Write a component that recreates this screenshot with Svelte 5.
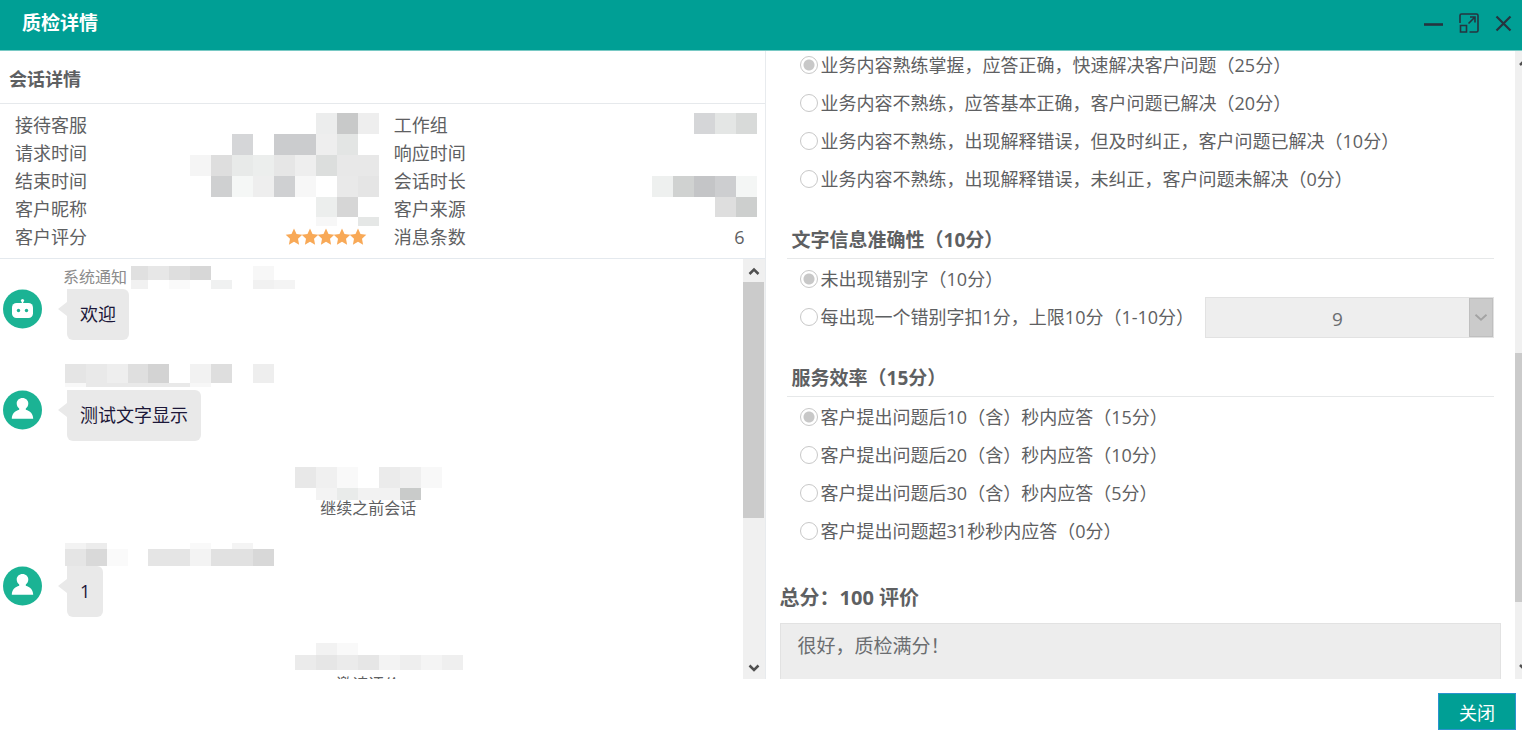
<script>
  const info = [
    ['接待客服', '', '工作组', ''],
    ['请求时间', '', '响应时间', ''],
    ['结束时间', '', '会话时长', ''],
    ['客户昵称', '', '客户来源', ''],
    ['客户评分', 'stars', '消息条数', '6']
  ];

  // Redacted values: [x, y, width, height, colour]
  const leftMask = [
    [126, 0, 21, 21, '#eceded'], [147, 0, 21, 21, '#c8c9c9'], [168, 0, 21, 21, '#eeeeee'],
    [42, 21, 21, 21, '#d5d6d8'], [84, 21, 42, 21, '#cbccce'], [126, 21, 21, 21, '#eeeeee'], [147, 21, 21, 21, '#e3e5e4'],
    [0, 42, 21, 21, '#f5f5f5'], [21, 42, 21, 21, '#dedede'], [42, 42, 21, 21, '#e8eae9'], [63, 42, 21, 21, '#eceeed'],
    [84, 42, 21, 21, '#e6e6e6'], [105, 42, 21, 21, '#eeeeee'], [126, 42, 21, 21, '#dcdedd'], [147, 42, 42, 21, '#e8e8e8'],
    [21, 63, 21, 21, '#cfd0d1'], [42, 63, 21, 21, '#f5f7f6'], [63, 63, 21, 21, '#eeeeee'], [84, 63, 21, 21, '#cfd0d2'],
    [105, 63, 21, 21, '#f7f7f7'], [147, 63, 21, 21, '#e9e9e9'], [168, 63, 21, 21, '#e5e5e5'],
    [126, 84, 21, 20, '#eceeed'], [147, 84, 21, 20, '#d6d6d6'],
    [126, 104, 21, 9, '#f7f7f7'], [168, 104, 21, 9, '#e5e7e6']
  ];
  const rightMask = [
    [42, 0, 21, 21, '#d5d6d8'], [63, 0, 21, 21, '#e4e6e5'], [84, 0, 21, 21, '#d8dad9'],
    [0, 63, 21, 21, '#eef0ef'], [21, 63, 21, 21, '#d0d2d1'], [42, 63, 21, 21, '#c4c5c7'], [63, 63, 21, 21, '#cdced0'], [84, 63, 21, 21, '#f4f6f5'],
    [63, 84, 21, 20, '#dedede'], [84, 84, 21, 20, '#cdcfce']
  ];

  const chat = [
    {
      kind: 'robot', name: '系统通知', text: '欢迎', w: 164, h: 23,
      mask: [[0, 0, 17, 14, '#e0e0e0'], [17, 0, 21, 14, '#e7e7e7'], [38, 0, 21, 14, '#dedede'], [59, 0, 21, 14, '#d7d7d7'], [122, 0, 21, 14, '#f7f7f7'],
        [0, 14, 17, 9, '#f1f1f1'], [38, 14, 21, 9, '#fafafa'], [80, 14, 21, 9, '#f0f1f1'], [122, 14, 21, 9, '#f1f1f1'], [143, 14, 21, 9, '#f4f4f4']]
    },
    {
      kind: 'user', text: '测试文字显示', w: 209, h: 23,
      mask: [[0, 0, 21, 19, '#e5e5e5'], [21, 0, 21, 19, '#e9e9e9'], [42, 0, 21, 19, '#eeeeee'], [63, 0, 20, 19, '#dfdfdf'], [83, 0, 21, 19, '#d3d3d3'],
        [125, 0, 21, 19, '#f2f2f2'], [146, 0, 21, 19, '#dedede'], [188, 0, 21, 19, '#eeeeee'],
        [0, 19, 21, 4, '#f8f8f8'], [21, 19, 104, 4, '#e9e9e9'], [125, 19, 21, 4, '#f7f7f7']]
    },
    {
      kind: 'notice', text: '继续之前会话', w: 147, h: 33,
      mask: [[0, 0, 21, 21, '#e8e8e8'], [21, 0, 21, 21, '#f0f0f0'], [42, 0, 21, 21, '#f9f9f9'], [84, 0, 21, 21, '#ebebeb'], [105, 0, 21, 21, '#efefef'], [126, 0, 21, 21, '#f8f8f8'],
        [21, 21, 21, 12, '#f3f3f3'], [42, 21, 21, 12, '#e9ebea'], [63, 21, 42, 12, '#f2f2f2'], [105, 21, 21, 12, '#c9cbca']]
    },
    {
      kind: 'user', tight: true, text: '1', w: 209, h: 23,
      mask: [[0, 0, 21, 6, '#f3f3f3'], [21, 0, 21, 6, '#ececec'], [125, 0, 21, 6, '#f9f9f9'], [167, 0, 21, 6, '#f4f4f4'],
        [0, 6, 21, 17, '#e5e5e5'], [21, 6, 21, 17, '#d9d9d9'], [42, 6, 21, 17, '#fafafa'], [83, 6, 42, 17, '#e5e5e5'], [125, 6, 21, 17, '#f3f3f3'],
        [146, 6, 42, 17, '#e1e1e1'], [188, 6, 21, 17, '#d8d8d8']]
    },
    {
      kind: 'notice', text: '邀请评价', w: 147, h: 33,
      mask: [[21, 0, 21, 12, '#f2f2f2'], [42, 0, 21, 12, '#f9f9f9'],
        [0, 12, 21, 15, '#ebebeb'], [21, 12, 21, 15, '#e6e6e6'], [42, 12, 21, 15, '#ebebeb'], [63, 12, 21, 15, '#e6e6e6'],
        [84, 12, 21, 15, '#f3f3f3'], [105, 12, 21, 15, '#eeeeee'], [126, 12, 21, 15, '#f4f4f4'], [147, 12, 21, 15, '#efefef']]
    }
  ];

  const groups = [
    {
      id: 'skill', title: '',
      options: ['业务内容熟练掌握，应答正确，快速解决客户问题（25分）', '业务内容不熟练，应答基本正确，客户问题已解决（20分）',
        '业务内容不熟练，出现解释错误，但及时纠正，客户问题已解决（10分）', '业务内容不熟练，出现解释错误，未纠正，客户问题未解决（0分）']
    },
    { id: 'text', title: '文字信息准确性（10分）', options: ['未出现错别字（10分）', '每出现一个错别字扣1分，上限10分（1-10分）'], select: 1 },
    {
      id: 'speed', title: '服务效率（15分）',
      options: ['客户提出问题后10（含）秒内应答（15分）', '客户提出问题后20（含）秒内应答（10分）', '客户提出问题后30（含）秒内应答（5分）', '客户提出问题超31秒秒内应答（0分）']
    }
  ];
</script>

{#snippet mosaic(cells, w, h)}
  <svg class="mosaic" width={w} height={h} viewBox="0 0 {w} {h}" shape-rendering="crispEdges" aria-hidden="true">
    {#each cells as [x, y, cw, ch, fill]}
      <rect {x} {y} width={cw} height={ch} {fill} />
    {/each}
  </svg>
{/snippet}

<div class="dialog" role="dialog" aria-labelledby="title">
  <header class="titlebar">
    <h1 id="title">质检详情</h1>
    <div class="tools">
      <button type="button" aria-label="最小化">
        <svg width="20" height="20" viewBox="0 0 20 20"><path d="M0 11.500H19" stroke-width="2.6" /></svg>
      </button>
      <button type="button" aria-label="最大化">
        <svg width="20" height="20" viewBox="0 0 20 20"><path d="M1 10V2.500Q1 1 2.500 1H17.500Q19 1 19 2.500V17.500Q19 19 17.500 19H10.500M1.500 12.500H7.500V19H1.500ZM9.500 10.500L16 4M11 4H16V9.500" stroke-width="1.6" /></svg>
      </button>
      <button type="button" aria-label="关闭窗口">
        <svg width="20" height="20" viewBox="0 0 20 20"><path d="M2.500 3.500L16.500 17.500M16.500 3.500L2.500 17.500" stroke-width="2.2" /></svg>
      </button>
    </div>
  </header>

  <main>
    <section class="session">
      <h2>会话详情</h2>
      <div class="info">
        {#each info as [label, value, label2, value2]}
          <div class="cell">
            <span>{label}</span>
            {#if value === 'stars'}
              <span class="stars" role="img" aria-label="5星">
                {#each Array(5) as _}
                  <svg width="16" height="18" viewBox="0 0 16 16" overflow="visible"><path fill="#f8a957" d="M8 -0.500L10.500 5L16.300 5.700L12 9.800L13.100 15.700L8 12.800L2.900 15.700L4 9.800L-0.300 5.700L5.500 5Z" /></svg>
                {/each}
              </span>
            {/if}
          </div>
          <div class="cell"><span>{label2}</span><span class="count">{value2}</span></div>
        {/each}
        <div class="mask left">{@render mosaic(leftMask, 189, 113)}</div>
        <div class="mask right">{@render mosaic(rightMask, 105, 104)}</div>
      </div>

      <div class="chat">
        <div class="log">
          {#each chat as m}
            {#if m.kind === 'notice'}
              <div class="notice">{@render mosaic(m.mask, m.w, m.h)}<p>{m.text}</p></div>
            {:else}
              <article class="message">
                <div class="meta" class:tight={m.tight}>
                  {#if m.name}<span>{m.name}</span>{/if}
                  {@render mosaic(m.mask, m.w, m.h)}
                </div>
                <svg class="avatar" width="40" height="40" viewBox="0 0 40 40" aria-hidden="true">
                  <circle cx="19.500" cy="20" r="19.500" fill="#1bb394" />
                  {#if m.kind === 'robot'}
                    <circle cx="19.500" cy="11.500" r="1.600" fill="#fff" />
                    <path d="M19.500 12V16" stroke="#fff" stroke-width="1.400" />
                    <rect x="9" y="14" width="21" height="15" rx="4.500" fill="#fff" />
                    <circle cx="15.500" cy="21.500" r="1.700" fill="#1bb394" /><circle cx="23.500" cy="21.500" r="1.700" fill="#1bb394" />
                  {:else}
                    <path fill="#fff" d="M19.500 8C22.800 8 25.300 10.400 25.300 13.500C25.300 15.800 24.200 17.300 22.800 18.600V19.800C27 20.800 30.200 24 30.200 28.700H8.800C8.800 24 12 20.800 16.200 19.800V18.600C14.800 17.300 13.700 15.800 13.700 13.500C13.700 10.400 16.200 8 19.500 8Z" />
                  {/if}
                </svg>
                <p class="bubble">{m.text}</p>
              </article>
            {/if}
          {/each}
        </div>
        <div class="scroll" aria-hidden="true">
          <svg width="12" height="23" viewBox="0 0 12 23"><path d="M1.500 15L6 10.500L10.500 15" /></svg>
          <div class="track"><i class="thumb"></i></div>
          <svg width="12" height="22" viewBox="0 0 12 22"><path d="M1.500 8.500L6 13L10.500 8.500" /></svg>
        </div>
      </div>
    </section>

    <section class="review">
      <form>
        {#each groups as g}
          <fieldset class:first={!g.title}>
            {#if g.title}<legend>{g.title}</legend>{/if}
            {#each g.options as o, i}
              <div class="option">
                <input type="radio" id="{g.id}{i}" name={g.id} checked={i === 0} disabled />
                <label for="{g.id}{i}">{o}</label>
                {#if g.select === i}
                  <span class="picker">
                    <select disabled aria-label="扣分"><option>9</option></select>
                    <svg width="24" height="39" viewBox="0 0 24 39" aria-hidden="true"><path d="M6 16.500L12 22L18 16.500" /></svg>
                  </span>
                {/if}
              </div>
            {/each}
          </fieldset>
        {/each}
        <label class="total" for="comment">总分：100 评价</label>
        <textarea id="comment" disabled value="很好，质检满分！"></textarea>
      </form>
      <div class="rail" aria-hidden="true">
        <svg width="7" height="22" viewBox="0 0 7 22"><path d="M5 14L9 10" /></svg>
        <div class="track"><i></i></div>
        <svg width="7" height="22" viewBox="0 0 7 22"><path d="M5 8L9 12" /></svg>
      </div>
    </section>
  </main>

  <footer><button type="button">关闭</button></footer>
</div>

<style>
  :global(body) { margin: 0; background: #fff; }
  .dialog {
    box-sizing: border-box;
    display: flex;
    flex-direction: column;
    height: 100vh;
    overflow: hidden;
    color: #5e6062;
    font: 18px/28px "Open Sans", "Noto Sans CJK SC", sans-serif;
  }
  .dialog * { box-sizing: border-box; }
  h1, h2, p { margin: 0; }
  svg { display: block; flex: none; }

  .titlebar {
    flex: none;
    display: flex;
    justify-content: space-between;
    align-items: center;
    height: 51px;
    padding: 0 8px 4px 22px;
    background: #009f95;
    border-bottom: 1px solid #78c9c4;
    color: #fff;
  }
  h1 { font-size: 19px; line-height: 28px; }
  .tools { display: flex; gap: 15px; }
  .tools button { padding: 0; border: 0; background: none; }
  .tools path { fill: none; stroke: #26343f; }

  main { flex: 1; min-height: 0; display: flex; }
  .session {
    width: 50.3%;
    display: flex;
    flex-direction: column;
    border-right: 1px solid #e8ebee;
  }
  h2 {
    flex: none;
    padding: 14px 9px 10px;
    border-bottom: 1px solid #e6e9ec;
    font-size: 18px;
  }
  .info {
    position: relative;
    flex: none;
    display: grid;
    grid-template-columns: 1fr 1fr;
    padding: 7px 8px 7px 15px;
    border-bottom: 1px solid #e4e9ee;
  }
  .cell { display: flex; justify-content: space-between; padding-right: 12px; }
  .cell:nth-child(even) { padding-left: 8px; }
  .stars { display: flex; align-items: center; margin-right: 8px; }
  .mask { position: absolute; top: 9px; }
  .left { right: 386px; }
  .right { right: 8px; }

  .chat { flex: 1; min-height: 0; display: flex; }
  .log {
    flex: 1;
    min-width: 0;
    display: flex;
    flex-direction: column;
    gap: 20px;
    overflow: hidden;
  }
  .message {
    flex: none;
    display: grid;
    grid-template-columns: 64px 1fr;
    padding-left: 3px;
  }
  .meta {
    grid-column: 2;
    display: flex;
    align-items: flex-end;
    gap: 4px;
    height: 30px;
    margin-left: -4px;
    font-size: 16px;
    line-height: 24px;
    color: #8c8c8c;
  }
  .meta svg:first-child { margin: 0 0 3px 2px; }
  .tight svg:first-child { margin-bottom: 0; }
  .bubble {
    position: relative;
    justify-self: start;
    padding: 11px 13px 12px;
    background: #e9e9e9;
    border-radius: 0 6px 6px 6px;
    color: #1c1738;
  }
  .bubble::before {
    content: "";
    position: absolute;
    left: -9px;
    top: 13px;
    border: solid transparent;
    border-width: 7px 9px 7px 0;
    border-right-color: #e9e9e9;
  }
  .notice {
    flex: none;
    display: flex;
    flex-direction: column;
    align-items: center;
    padding: 6px 6px 0 0;
    font-size: 16px;
    line-height: 16px;
  }
  .notice svg { overflow: visible; }
  .scroll {
    width: 22px;
    display: flex;
    flex-direction: column;
    align-items: center;
    background: #f0f0f0;
  }
  .scroll path, .rail path { fill: none; stroke: #505050; stroke-width: 2.5; }
  .track { flex: 1; width: 100%; }
  .scroll .track { padding-right: 1px; }
  .thumb { display: block; height: 63%; background: #cbcbcb; }

  .review { flex: 1; min-width: 0; display: flex; }
  form {
    flex: 1;
    min-width: 0;
    display: flex;
    flex-direction: column;
    padding: 0 14px;
    overflow: hidden;
  }
  fieldset {
    flex: none;
    min-width: 0;
    margin: 0 7px 28px;
    padding: 0;
    border: 0;
  }
  .first { margin-top: -5px; }
  legend {
    width: 100%;
    padding: 0 0 4px 5px;
    border-bottom: 1px solid #e6e8e9;
    font-size: 19px;
    font-weight: bold;
    line-height: 28px;
  }
  legend + .option { margin-top: 1px; }
  .option { display: flex; align-items: center; height: 38px; padding-left: 13px; gap: 3px; }
  .option label { white-space: nowrap; }
  input {
    appearance: none;
    flex: none;
    width: 18px;
    height: 18px;
    margin: 0;
    border: 1px solid #c8c8c8;
    border-radius: 50%;
    background: #fff;
  }
  input:checked { background: radial-gradient(circle, #c8c8c8 5px, #fff 6px); }
  .picker { position: relative; width: 289px; margin-left: auto; }
  select {
    appearance: none;
    display: block;
    width: 100%;
    height: 41px;
    padding: 4px 24px 0 0;
    border: 1px solid #e2e2e2;
    border-radius: 0;
    background: #eeeeee;
    color: #6b6d70;
    opacity: 1;
    font: inherit;
    font-size: 19px;
    text-align: center;
    text-align-last: center;
  }
  .picker svg { position: absolute; right: 1px; top: 1px; background: #cbcbcb; border: 1px solid #bfbfbf; }
  .picker path { fill: none; stroke: #a3a3a3; stroke-width: 2; }
  .total { flex: none; margin-top: 6px; font-size: 20px; font-weight: bold; line-height: 28px; }
  textarea {
    flex: none;
    display: block;
    width: 100%;
    height: 96px;
    margin-top: 11px;
    padding: 8px 17px;
    resize: none;
    border: 1px solid #e2e2e2;
    border-radius: 0;
    background: #ededed;
    color: #6b6d70;
    font: inherit;
    font-size: 19px;
  }
  .rail { width: 7px; display: flex; flex-direction: column; background: #f0f0f0; }
  .rail .track { padding-top: 280px; }
  .rail i { display: block; height: 249px; background: #cbcbcb; }

  footer { flex: none; display: flex; justify-content: flex-end; height: 51px; padding: 14px 6px 0; }
  footer button {
    width: 78px;
    height: 37px;
    padding: 2px 0 0;
    border: 1px solid #2b93cf;
    background: #009f95;
    color: #fff;
    font: inherit;
  }
</style>
